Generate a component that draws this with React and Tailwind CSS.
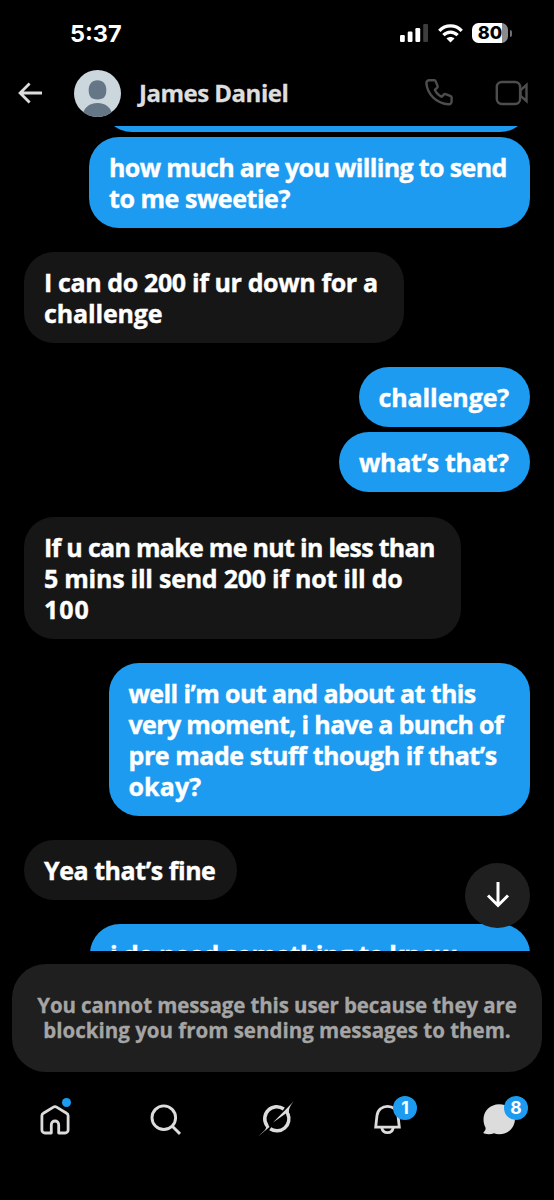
const messages = [
  {
    from: "me",
    box: "w-[428px] h-[60px]",
    lines: [],
  },
  {
    from: "me",
    box: "mt-[5.5px] w-[441px]",
    lines: [
      { text: "how much are you willing to send", tracking: "tracking-[-0.64px]" },
      { text: "to me sweetie?", tracking: "tracking-[-0.45px]" },
    ],
  },
  {
    from: "them",
    box: "mt-6 w-[380px]",
    lines: [
      { text: "I can do 200 if ur down for a", tracking: "tracking-[-0.38px]" },
      { text: "challenge", tracking: "tracking-[-0.15px]" },
    ],
  },
  {
    from: "me",
    box: "mt-6 w-[171.5px]",
    lines: [{ text: "challenge?", tracking: "tracking-[-0.1px]" }],
  },
  {
    from: "me",
    box: "mt-[5px] w-[191px]",
    lines: [{ text: "what’s that?", tracking: "tracking-[-0.3px]" }],
  },
  {
    from: "them",
    box: "mt-[24.5px] w-[436.5px]",
    lines: [
      { text: "If u can make me nut in less than", tracking: "tracking-[-0.7px]" },
      { text: "5 mins ill send 200 if not ill do", tracking: "tracking-[-0.25px]" },
      { text: "100", tracking: "tracking-[1px]" },
    ],
  },
  {
    from: "me",
    box: "mt-6 w-[421.5px]",
    lines: [
      { text: "well i’m out and about at this", tracking: "tracking-[-0.6px]" },
      { text: "very moment, i have a bunch of", tracking: "tracking-[-0.64px]" },
      { text: "pre made stuff though if that’s", tracking: "tracking-[-0.44px]" },
      { text: "okay?", tracking: "tracking-[0.1px]" },
    ],
  },
  {
    from: "them",
    box: "mt-6 w-[213px]",
    lines: [{ text: "Yea that’s fine", tracking: "tracking-[-0.44px]" }],
  },
  {
    from: "me",
    box: "mt-6 w-[440px]",
    lines: [{ text: "i do need something to know", tracking: "tracking-[-0.56px]" }],
  },
];

function StatusBar() {
  return (
    <div className="flex h-[60.5px] shrink-0 items-center justify-between pt-[6px] pr-[42px] pl-[70px]">
      <span className="font-['Inter',sans-serif] text-[23.5px] leading-none font-bold text-white">
        5:37
      </span>
      <div className="flex items-center">
        <svg width="29" height="18" viewBox="0 0 29 18" fill="#fff">
          <rect x="0" y="11" width="4.8" height="7" rx="1.2" />
          <rect x="7.7" y="7.5" width="4.8" height="10.5" rx="1.2" />
          <rect x="15.4" y="4" width="4.8" height="14" rx="1.2" />
          <rect x="23.2" y="0" width="4.8" height="18" rx="1.2" fill="#3d3d3d" />
        </svg>
        <svg
          className="ml-[9.5px]"
          width="25"
          height="19"
          viewBox="0 0 25 19"
          fill="none"
          stroke="#fff"
          strokeWidth="3.3"
        >
          <path d="M1.3 6.8c6.3-6.6 16.1-6.6 22.4 0" />
          <path d="M5.4 11.2c4.1-4.1 10.1-4.1 14.2 0" />
          <path
            d="M12.5 18.6l-4-4.1c2.2-2 5.8-2 8 0z"
            fill="#fff"
            stroke="none"
          />
        </svg>
        <div className="ml-[9px] flex h-5 w-9 items-center justify-center rounded-[6.5px] bg-linear-to-r from-white from-82% to-[#8a8a8a] to-82%">
          <span className="font-['Inter',sans-serif] text-[18px] leading-none font-extrabold text-black">
            80
          </span>
        </div>
        <div className="ml-[1.5px] h-[7px] w-[2.5px] rounded-r-full bg-[#6f6f6f]" />
      </div>
    </div>
  );
}

function ChatHeader() {
  return (
    <header className="flex h-[65px] shrink-0 items-center pr-[25px] pl-[17px]">
      <svg
        width="26"
        height="24"
        viewBox="0 0 26 24"
        fill="none"
        stroke="#dcdcdc"
        strokeWidth="2.8"
      >
        <path d="M12.6 2.5L3.1 12l9.500 9.500M3 12h22" />
      </svg>
      <svg className="ml-[31px]" width="47" height="47" viewBox="0 0 47 47">
        <defs>
          <clipPath id="avatar">
            <circle cx="23.5" cy="23.5" r="23.5" />
          </clipPath>
        </defs>
        <g clipPath="url(#avatar)">
          <rect width="47" height="47" fill="#ccd6dd" />
          <path
            d="M23.5 10.3c5.7 0 8.8 4 8.8 9.8 0 6.5-2.5 9.4-8.8 9.4s-8.8-2.900-8.8-9.4c0-5.8 3.1-9.8 8.8-9.8z"
            fill="#657786"
          />
          <path d="M8.5 47c.5-9 6.5-14 15-14s14.5 5 15 14z" fill="#657786" />
        </g>
      </svg>
      <h1 className="ml-[18px] flex-1 text-[24px] leading-none font-bold tracking-[-0.5px] text-[#dedede] [-webkit-text-stroke:0.3px_#dedede]">
        James Daniel
      </h1>
      <svg
        width="30"
        height="30"
        viewBox="0 0 30 30"
        fill="none"
        stroke="#4d4d4d"
        strokeWidth="2.4"
        strokeLinejoin="round"
      >
        <path d="M5.2 2.3h5.2c.6 0 1 .3 1.2.8l2 5c.2.6 0 1.2-.4 1.6l-2.4 2.1c1.4 3.2 3.9 5.7 7 7l2.2-2.4c.4-.4 1-.6 1.6-.3l5.2 2.1c.5.2.8.7.8 1.2v4.2c0 1.6-1.3 2.8-2.9 2.7C12.6 25.6 3.1 16.2 2.4 5.2 2.3 3.6 3.6 2.3 5.2 2.3z" />
      </svg>
      <svg
        className="ml-[41px]"
        width="34"
        height="26"
        viewBox="0 0 34 26"
        fill="none"
        stroke="#4d4d4d"
        strokeWidth="2.4"
      >
        <rect x="1.8" y="2" width="23.3" height="22" rx="5" />
        <path d="M25.5 10.2l6-5.2v16l-6-5.2z" />
      </svg>
    </header>
  );
}

function Bubble({ message }) {
  const mine = message.from === "me";
  return (
    <div
      className={`shrink-0 rounded-[30px] px-5 pt-[15px] pb-[14px] ${message.box} ${
        mine ? "self-end bg-[#1d9bf0]" : "self-start bg-[#161616]"
      }`}
    >
      {message.lines.map((line) => (
        <p
          key={line.text}
          className={`text-[25px] leading-[31px] font-bold whitespace-nowrap text-white [-webkit-text-stroke:0.4px_#fff] ${line.tracking}`}
        >
          {line.text}
        </p>
      ))}
    </div>
  );
}

function HomeIcon() {
  return (
    <svg width="36" height="36" viewBox="0 0 36 36" fill="none" stroke="#dcdcdc" strokeWidth="2.8">
      <path
        strokeLinejoin="round"
        d="M14.3 32v-8.3a3.7 3.7 0 0 1 7.4 0V32h6.4a3 3 0 0 0 3-3V14.800a3 3 0 0 0-1.5-2.6l-10-6.1a3 3 0 0 0-3.2 0l-10 6.1a3 3 0 0 0-1.5 2.6V29a3 3 0 0 0 3 3z"
      />
    </svg>
  );
}

function SearchIcon() {
  return (
    <svg width="36" height="36" viewBox="0 0 36 36" fill="none" stroke="#dcdcdc" strokeWidth="2.9">
      <circle cx="15.8" cy="16.7" r="11.8" />
      <path d="M24.3 25.2l7.7 7.7" />
    </svg>
  );
}

function GrokIcon() {
  return (
    <svg width="40" height="40" viewBox="0 0 40 40" fill="#dcdcdc">
      <path
        d="M26.8 10A12 12 0 0 0 10 26.7"
        fill="none"
        stroke="#dcdcdc"
        strokeWidth="3.5"
      />
      <path
        d="M30.8 14.8A12 12 0 0 1 13.2 29.8"
        fill="none"
        stroke="#dcdcdc"
        strokeWidth="3.5"
      />
      <path d="M8.5 26.2c1 2 .5 3.400-1 5.200L.8 37.8 12.5 28l-1.3-2.6z" />
      <path d="M36.800 2.2L16 23.600l12.900-9 .8 2 2.700-1.200c-1.400-5 .6-8.600 4.400-13.200z" />
    </svg>
  );
}

function BellIcon() {
  return (
    <svg width="36" height="36" viewBox="0 0 36 36" fill="none" stroke="#dcdcdc" strokeWidth="2.8">
      <path d="M5.7 26.2L7 14.5C7.7 8.8 12.2 5.3 17.5 5.3S27.3 8.8 28 14.5l1.3 11.7z" />
      <path d="M11.7 26.500c.6 3.3 2.9 5.2 5.8 5.2s5.2-1.9 5.8-5.2" />
    </svg>
  );
}

function MessagesIcon() {
  return (
    <svg width="36" height="36" viewBox="0 0 36 36" fill="#dcdcdc">
      <path d="M18.2 3.2c8.8 0 15.7 6.5 15.7 15s-6.9 15-15.7 15c-2 0-3.6-.3-5.2-.9-2.6 1-6.2 1.3-9.8.2-.8-.2-1-1.1-.3-1.6 1.5-1.2 2-2.7 1.5-4.7-1.3-2.3-1.9-5-1.9-8 0-8.5 6.9-15 15.7-15z" />
    </svg>
  );
}

function Badge({ count }) {
  return (
    <span className="absolute -top-[5px] left-[23.5px] flex h-[23.5px] w-[23.5px] items-center justify-center rounded-full bg-[#1d9bf0] font-['Inter',sans-serif] text-[17.5px] leading-none font-bold text-white">
      {count}
    </span>
  );
}

const tabs = [
  { name: "home", icon: HomeIcon, dot: true },
  { name: "search", icon: SearchIcon },
  { name: "grok", icon: GrokIcon },
  { name: "notifications", icon: BellIcon, count: 1 },
  { name: "messages", icon: MessagesIcon, count: 8 },
];

export default function App() {
  return (
    <div className="flex h-[1200px] w-[554px] flex-col overflow-hidden bg-black font-['Open_Sans',sans-serif]">
      <StatusBar />
      <ChatHeader />

      {/* Conversation */}
      <div className="relative shrink-0">
        <main className="flex h-[825.5px] flex-col overflow-hidden px-6">
          <div className="-mt-[54px] flex flex-col">
            {messages.map((message, i) => (
              <Bubble key={i} message={message} />
            ))}
          </div>
        </main>
        <button className="absolute right-6 bottom-[23.5px] flex h-[65px] w-[65px] items-center justify-center rounded-full bg-[#1f1f1f]">
          <svg
            width="26"
            height="28"
            viewBox="0 0 26 28"
            fill="none"
            stroke="#fff"
            strokeWidth="3"
          >
            <path d="M13 1v23.5M3 14.5l10 10 10-10" />
          </svg>
        </button>
      </div>

      <div className="mx-3 mt-[12.5px] h-[108px] shrink-0 rounded-[34px] bg-[#1f1f1f] pt-[29px] text-center text-[20.5px] leading-[25px] font-bold text-[#a5a5a5] [-webkit-text-stroke:0.3px_#a5a5a5]">
        <p className="tracking-[-0.1px]">
          You cannot message this user because they are
        </p>
        <p>blocking you from sending messages to them.</p>
      </div>

      {/* Tab bar */}
      <nav className="mt-[29.5px] grid grid-cols-5">
        {tabs.map(({ name, icon: Icon, dot, count }) => (
          <div key={name} className="flex h-9 items-center justify-center">
            <div className="relative">
              <Icon />
              {dot && (
                <span className="absolute -top-[3px] left-[25px] h-[9px] w-[9px] rounded-full bg-[#1d9bf0]" />
              )}
              {count && <Badge count={count} />}
            </div>
          </div>
        ))}
      </nav>
    </div>
  );
}
